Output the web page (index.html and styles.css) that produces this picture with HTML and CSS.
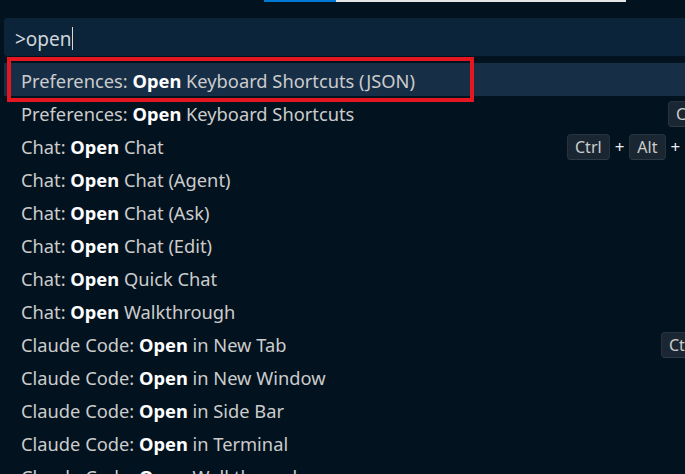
FILE: index.html
```html
<!DOCTYPE html>
<html lang="en">
<head>
<meta charset="utf-8">
<title>Command Palette</title>
<link rel="stylesheet" href="styles.css">
</head>
<body>
<div class="topbar">
  <span class="seg seg-blue"></span>
  <span class="seg seg-light"></span>
</div>
<div class="palette">
  <div class="input">&gt;open<span class="caret"></span></div>
  <ul class="list">
    <li class="row selected"><span class="label">Preferences: <b>Open</b> Keyboard Shortcuts (JSON)</span></li>
    <li class="row"><span class="label">Preferences: <b>Open</b> Keyboard Shortcuts</span><span class="keys far"><kbd>Ctrl</kbd><i>+</i><kbd>K</kbd><kbd class="chord">Ctrl</kbd><i>+</i><kbd>S</kbd></span></li>
    <li class="row"><span class="label">Chat: <b>Open</b> Chat</span><span class="keys"><kbd>Ctrl</kbd><i>+</i><kbd>Alt</kbd><i>+</i><kbd>I</kbd></span></li>
    <li class="row"><span class="label">Chat: <b>Open</b> Chat (Agent)</span></li>
    <li class="row"><span class="label">Chat: <b>Open</b> Chat (Ask)</span></li>
    <li class="row"><span class="label">Chat: <b>Open</b> Chat (Edit)</span></li>
    <li class="row"><span class="label">Chat: <b>Open</b> Quick Chat</span></li>
    <li class="row"><span class="label">Chat: <b>Open</b> Walkthrough</span></li>
    <li class="row"><span class="label">Claude Code: <b>Open</b> in New Tab</span><span class="keys near"><kbd>Ctrl</kbd><i>+</i><kbd>Shift</kbd><i>+</i><kbd>Esc</kbd></span></li>
    <li class="row"><span class="label">Claude Code: <b>Open</b> in New Window</span></li>
    <li class="row"><span class="label">Claude Code: <b>Open</b> in Side Bar</span></li>
    <li class="row"><span class="label">Claude Code: <b>Open</b> in Terminal</span></li>
    <li class="row"><span class="label">Claude Code: <b>Open</b> Walkthrough</span></li>
  </ul>
</div>
<div class="highlight-box"></div>
</body>
</html>
```
FILE: styles.css
```css
html, body {
  margin: 0;
  padding: 0;
}
body {
  width: 685px;
  height: 474px;
  overflow: hidden;
  background: #02121f;
  font-family: "Noto Sans", "Open Sans", sans-serif;
  color: #cccccc;
  position: relative;
}
.topbar {
  display: flex;
  height: 2px;
  padding-left: 264px;
}
.seg { display: block; height: 2px; }
.seg-blue { width: 72px; background: #0078d4; }
.seg-light { width: 290px; background: #e6e6e6; }

.palette {
  padding-left: 4px;
  margin-top: 16px;
  overflow: hidden;
}
.input {
  height: 38px;
  box-sizing: border-box;
  background: #0c243a;
  border-radius: 3px 0 0 3px;
  padding: 3px 0 0 11px;
  display: flex;
  align-items: center;
  font-size: 19px;
  color: #cfd6dc;
}
.caret {
  display: inline-block;
  width: 1px;
  height: 23px;
  background: #d8d8d8;
  margin-left: 0;
}
.list {
  list-style: none;
  margin: 7px 0 0;
  padding: 0;
}
.row {
  height: 33px;
  display: grid;
  grid-template-columns: 546px auto;
  align-items: center;
  padding: 2px 0 0 17px;
  box-sizing: border-box;
  font-size: 18.3px;
  white-space: nowrap;
}
.row.selected {
  background: #172e47;
}
.label b {
  font-weight: 700;
  color: #ffffff;
}
.keys {
  display: flex;
  align-items: center;
  gap: 4px;
  font-size: 16px;
}
.keys.far { margin-left: 101px; }
.keys.near { margin-left: 94px; }
.keys kbd {
  font-family: inherit;
  display: inline-block;
  height: 26px;
  line-height: 24px;
  box-sizing: border-box;
  padding: 0 7px;
  background: #1a2733;
  border: 1px solid #26323d;
  border-bottom-color: #2e3a46;
  border-radius: 4px;
  color: #cccccc;
}
.keys kbd.chord { margin-left: 6px; }
.keys i {
  font-style: normal;
  color: #e6edf3;
  font-size: 17px;
  padding: 0 1px;
}
.highlight-box {
  position: absolute;
  left: 7px;
  top: 57px;
  width: 467px;
  height: 45px;
  box-sizing: border-box;
  border: 4px solid #e4161f;
}
```
